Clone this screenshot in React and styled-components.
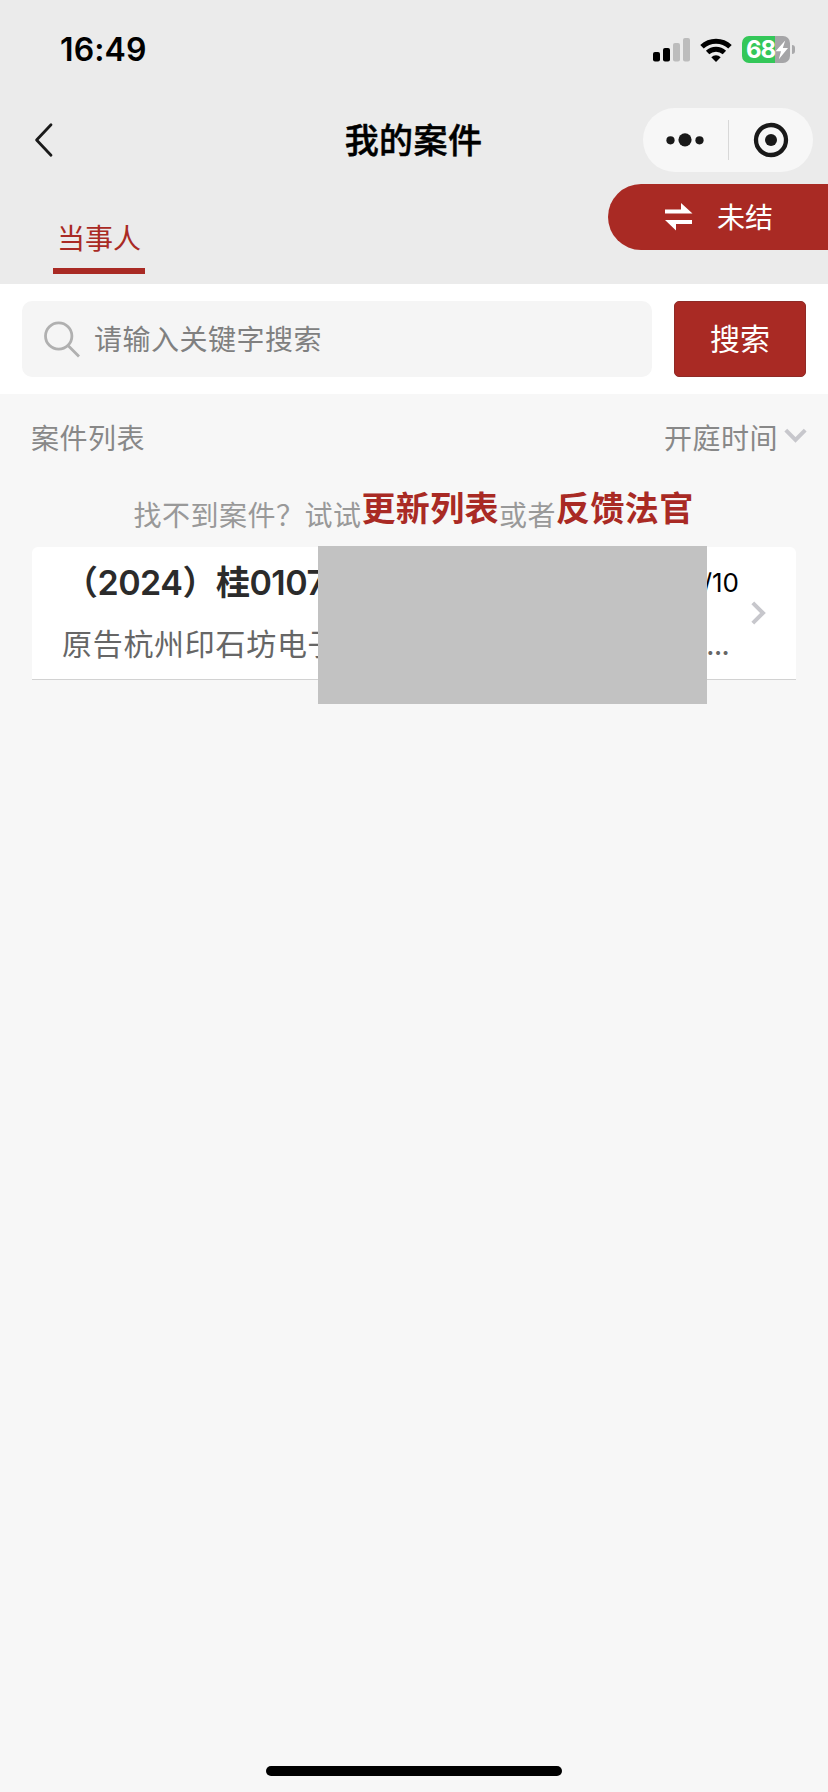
import React from "react";
import styled, { createGlobalStyle } from "styled-components";

const RED = "#a92a24";

const GlobalStyle = createGlobalStyle`
  * { box-sizing: border-box; }
  body {
    margin: 0;
    background: #f7f7f7;
    font-family: Inter, "Noto Sans CJK SC", sans-serif;
  }
`;

const Screen = styled.div`
  display: flex;
  flex-direction: column;
  width: 828px;
  height: 1792px;
  background: #f7f7f7;
  overflow: hidden;
`;

const Header = styled.header`
  height: 284px;
  background: #ebebeb;
`;

const StatusBar = styled.div`
  display: flex;
  align-items: center;
  justify-content: space-between;
  height: 99px;
  padding: 0 33px 0 60px;
`;

const Clock = styled.span`
  padding-top: 1px;
  font-size: 32px;
  font-weight: 600;
  line-height: 40px;
  letter-spacing: 0.1px;
  color: #000;
`;

const StatusIcons = styled.div`
  display: flex;
  align-items: center;
  gap: 10px;
`;

const Battery = styled.div`
  display: flex;
  align-items: center;
  gap: 2px;
`;

const BatteryBody = styled.div`
  display: flex;
  align-items: center;
  width: 48px;
  height: 27px;
  padding-left: 4px;
  border-radius: 7px;
  background: linear-gradient(to right, #34c759 33px, #a5a5a7 33px);
  color: #fff;
  font-size: 24px;
  font-weight: 700;
  line-height: 28px;
  letter-spacing: -1.2px;
`;

const BatteryTip = styled.div`
  width: 3px;
  height: 9px;
  border-radius: 0 4px 4px 0;
  background: #a9a9ab;
`;

const NavBar = styled.div`
  display: grid;
  grid-template-columns: 1fr auto 1fr;
  align-items: center;
  height: 82px;
  padding: 0 15px 0 34px;
`;

const NavTitle = styled.h1`
  margin: 0 0 0 -20px;
  padding-top: 1px;
  font-size: 34px;
  font-weight: 500;
  line-height: 44px;
  letter-spacing: 0.4px;
  color: #000;
  -webkit-text-stroke: 0.5px #000;
`;

const Capsule = styled.div`
  display: flex;
  align-items: center;
  justify-self: end;
  width: 170px;
  height: 64px;
  border-radius: 32px;
  background: #f7f7f7;
`;

const CapsuleHalf = styled.div`
  display: flex;
  flex: 1;
  justify-content: center;
`;

const CapsuleDivider = styled.div`
  width: 1px;
  height: 40px;
  background: #d8d8d8;
`;

const TabRow = styled.div`
  display: flex;
  align-items: flex-start;
  justify-content: space-between;
  height: 103px;
  padding: 3px 0 0 53px;
`;

const Tab = styled.div`
  display: flex;
  flex-direction: column;
  align-items: center;
  width: 92px;
  height: 90px;
  padding-top: 37px;
  border-bottom: 6px solid ${RED};
  color: ${RED};
  font-size: 28px;
  line-height: 36px;
  white-space: nowrap;
`;

const FilterPill = styled.button`
  display: flex;
  align-items: center;
  gap: 24px;
  width: 220px;
  height: 66px;
  padding: 0 0 0 56px;
  border: 0;
  border-radius: 33px 0 0 33px;
  background: ${RED};
  color: #fff;
  font: 400 28px/36px Inter, "Noto Sans CJK SC", sans-serif;
`;

const PillText = styled.span`
  padding-top: 2px;
`;

const SearchBar = styled.div`
  display: flex;
  justify-content: space-between;
  height: 110px;
  padding: 17px 22px;
  background: #fff;
`;

const SearchField = styled.div`
  display: flex;
  align-items: center;
  gap: 13px;
  width: 630px;
  height: 76px;
  padding-left: 22px;
  border-radius: 10px;
  background: #f5f5f5;
`;

const Label = styled.span`
  padding-top: 2px;
  font-size: 28px;
  line-height: 36px;
  letter-spacing: 0.5px;
  color: ${(p) => p.$color || "#888"};
`;

const SearchButton = styled.button`
  width: 132px;
  height: 76px;
  padding: 0;
  border: 1px solid #8f2a26;
  border-radius: 5px;
  background: ${RED};
  color: #fff;
  font: 400 30px/40px Inter, "Noto Sans CJK SC", sans-serif;
`;

const ListHeader = styled.div`
  display: flex;
  align-items: center;
  justify-content: space-between;
  height: 88px;
  padding: 0 21px 0 31px;
`;

const SortControl = styled.div`
  display: flex;
  align-items: center;
  gap: 6px;

  svg {
    margin-bottom: 4px;
  }
`;

const Hint = styled.p`
  display: flex;
  justify-content: center;
  height: 65px;
  margin: 0;
  padding: 14px 1px 0 0;
`;

const HintText = styled(Label)`
  line-height: 37px;
`;

const HintLink = styled.a`
  margin-top: -9px;
  font-size: 34px;
  font-weight: 600;
  line-height: 44px;
  letter-spacing: 0.4px;
  color: ${RED};
`;

const CaseCard = styled.article`
  position: relative;
  display: flex;
  align-items: center;
  justify-content: space-between;
  width: 764px;
  height: 133px;
  margin: 0 32px;
  padding: 0 30px;
  border-bottom: 1px solid #d2d2d2;
  border-radius: 6px 6px 0 0;
  background: #fff;
`;

const CaseBody = styled.div`
  display: flex;
  flex-direction: column;
  gap: 18px;
  width: 677px;
`;

const CaseLine = styled.div`
  display: flex;
  align-items: center;
  justify-content: space-between;
  height: 44px;
  padding-right: ${(p) => p.$end || 0}px;
`;

const CaseNumber = styled.strong`
  padding: 1px 0 0 2px;
  font-size: 34px;
  font-weight: 600;
  line-height: 44px;
  letter-spacing: -0.5px;
  color: #2b2b2b;
`;

const CaseDate = styled.span`
  padding-top: 1px;
  font-size: 26px;
  line-height: 32px;
  color: #000;
`;

const CaseParties = styled.span`
  font-size: 30px;
  line-height: 40px;
  letter-spacing: ${(p) => (p.$tight ? -1 : 0.7)}px;
  color: #666;
`;

const Redaction = styled.div`
  position: absolute;
  top: -1px;
  left: 286px;
  width: 389px;
  height: 158px;
  background: #c2c2c2;
`;

const HomeIndicator = styled.div`
  width: 296px;
  height: 10px;
  margin: auto auto 16px;
  border-radius: 5px;
  background: #000;
`;

const SignalIcon = () => (
  <svg width="37" height="24" viewBox="0 0 37 24">
    <rect x="0" y="14" width="7" height="9.5" rx="2" />
    <rect x="10" y="10" width="7" height="13.5" rx="2" />
    <rect x="20" y="5" width="7" height="18.5" rx="2" fill="#bcbcbc" />
    <rect x="30" y="0" width="7" height="23.5" rx="2" fill="#bcbcbc" />
  </svg>
);

const WifiIcon = () => (
  <svg width="32" height="24" viewBox="0 0 32 24">
    <path d="M2 8.8 A20.3 20.3 0 0 1 30 8.8" fill="none" stroke="#000" strokeWidth="5" />
    <path d="M7.6 14.6 A12.2 12.2 0 0 1 24.4 14.6" fill="none" stroke="#000" strokeWidth="4.8" />
    <path d="M11.3 19.2 A6.8 6.8 0 0 1 20.7 19.2 L16 24 Z" />
  </svg>
);

const BoltIcon = () => (
  <svg width="14" height="20" viewBox="0 0 14 20">
    <path d="M10.2 0.5 L0.6 11.2 H6 L3.8 19.2 L13 8 H7.8 Z" fill="#fff" />
  </svg>
);

const BackIcon = () => (
  <svg width="20" height="36" viewBox="0 0 20 36">
    <path d="M17 2.8 L2.6 18 L17 33.2" fill="none" stroke="#1a1a1a" strokeWidth="2.8" strokeLinecap="round" strokeLinejoin="round" />
  </svg>
);

const MoreIcon = () => (
  <svg width="38" height="14" viewBox="0 0 38 14" fill="#191919">
    <circle cx="4.5" cy="7.3" r="4.1" />
    <circle cx="19" cy="6.8" r="6.6" />
    <circle cx="33.5" cy="7.3" r="4.1" />
  </svg>
);

const TargetIcon = () => (
  <svg width="36" height="36" viewBox="0 0 36 36">
    <circle cx="18" cy="18" r="15" fill="none" stroke="#191919" strokeWidth="4.3" />
    <circle cx="18" cy="18" r="6" fill="#191919" />
  </svg>
);

const SwapIcon = () => (
  <svg width="29" height="28" viewBox="0 0 29 28" fill="#fff">
    <path d="M1 6.5 H17 V0 L28.5 10.5 H1 Z" />
    <path d="M28 17 H1 L12 27.5 V21 H28 Z" />
  </svg>
);

const SearchIcon = () => (
  <svg width="37" height="37" viewBox="0 0 37 37" fill="none" stroke="#b0b0b0" strokeWidth="2.8">
    <circle cx="14.7" cy="15" r="13.2" />
    <path d="M24 24.5 L35 35.5" />
  </svg>
);

const ChevronDown = () => (
  <svg width="23" height="16" viewBox="0 0 23 16">
    <path d="M1.8 2.2 L11.5 12 L21.2 2.2" fill="none" stroke="#c7c7cc" strokeWidth="4" />
  </svg>
);

const ChevronRight = () => (
  <svg width="15" height="24" viewBox="0 0 15 24">
    <path d="M1.8 1.8 L12 12 L1.8 22.2" fill="none" stroke="#c7c7cc" strokeWidth="4" />
  </svg>
);

export default function App() {
  return (
    <Screen>
      <GlobalStyle />
      <Header>
        <StatusBar>
          <Clock>16:49</Clock>
          <StatusIcons>
            <SignalIcon />
            <WifiIcon />
            <Battery>
              <BatteryBody>
                68
                <BoltIcon />
              </BatteryBody>
              <BatteryTip />
            </Battery>
          </StatusIcons>
        </StatusBar>
        <NavBar>
          <BackIcon />
          <NavTitle>我的案件</NavTitle>
          <Capsule>
            <CapsuleHalf>
              <MoreIcon />
            </CapsuleHalf>
            <CapsuleDivider />
            <CapsuleHalf>
              <TargetIcon />
            </CapsuleHalf>
          </Capsule>
        </NavBar>
        <TabRow>
          <Tab>当事人</Tab>
          <FilterPill>
            <SwapIcon />
            <PillText>未结</PillText>
          </FilterPill>
        </TabRow>
      </Header>
      <SearchBar>
        <SearchField>
          <SearchIcon />
          <Label $color="#808080">请输入关键字搜索</Label>
        </SearchField>
        <SearchButton>搜索</SearchButton>
      </SearchBar>
      <ListHeader>
        <Label>案件列表</Label>
        <SortControl>
          <Label>开庭时间</Label>
          <ChevronDown />
        </SortControl>
      </ListHeader>
      <Hint>
        <HintText $color="#999">找不到案件？试试</HintText>
        <HintLink>更新列表</HintLink>
        <HintText $color="#999">或者</HintText>
        <HintLink>反馈法官</HintLink>
      </Hint>
      <CaseCard>
        <CaseBody>
          <CaseLine>
            <CaseNumber>（2024）桂0107</CaseNumber>
            <CaseDate>/10</CaseDate>
          </CaseLine>
          <CaseLine $end={10}>
            <CaseParties>原告杭州印石坊电子</CaseParties>
            <CaseParties $tight>...</CaseParties>
          </CaseLine>
        </CaseBody>
        <ChevronRight />
        <Redaction />
      </CaseCard>
      <HomeIndicator />
    </Screen>
  );
}
